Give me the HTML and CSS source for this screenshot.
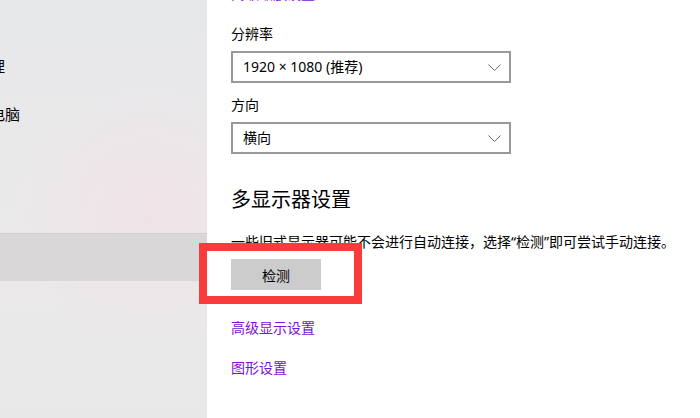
FILE: index.html
```html
<!DOCTYPE html>
<html lang="zh-CN">
<head>
<meta charset="utf-8">
<title>显示设置</title>
<link rel="stylesheet" href="styles.css">
</head>
<body>
<div class="app">
  <nav class="sidebar">
    <ul class="nav">
      <li class="nav-item"><span class="nav-text">平板电脑</span></li>
      <li class="nav-item"><span class="nav-text">多任务处理</span></li>
      <li class="nav-item"><span class="nav-text">投影到此电脑</span></li>
      <li class="nav-item"><span class="nav-text">体验共享</span></li>
      <li class="nav-item"><span class="nav-text">剪贴板</span></li>
      <li class="nav-item active"><span class="nav-text">远程桌面</span></li>
      <li class="nav-item"><span class="nav-text">关于</span></li>
    </ul>
  </nav>
  <main class="content">
    <a class="link top-link">高级缩放设置</a>
    <div class="label first-label">分辨率</div>
    <div class="select">
      <span class="select-text">1920 × 1080 (推荐)</span>
      <svg class="chevron" width="13" height="7" viewBox="0 0 13 7"><path d="M0.5 0.5 L6.5 6.5 L12.5 0.5" fill="none" stroke="#6b6b6b" stroke-width="1"/></svg>
    </div>
    <div class="label">方向</div>
    <div class="select">
      <span class="select-text">横向</span>
      <svg class="chevron" width="13" height="7" viewBox="0 0 13 7"><path d="M0.5 0.5 L6.5 6.5 L12.5 0.5" fill="none" stroke="#6b6b6b" stroke-width="1"/></svg>
    </div>
    <h2 class="heading">多显示器设置</h2>
    <p class="desc">一些旧式显示器可能不会进行自动连接，选择“检测”即可尝试手动连接。</p>
    <button class="btn">检测</button>
    <a class="link link-adv">高级显示设置</a>
    <a class="link link-gfx">图形设置</a>
  </main>
</div>
<div class="highlight"></div>
</body>
</html>
```

FILE: styles.css
```css
* { box-sizing: border-box; }

html, body {
  margin: 0;
  padding: 0;
  width: 700px;
  height: 418px;
  overflow: hidden;
  background: #ffffff;
  font-family: "Noto Sans", "Noto Sans CJK SC", sans-serif;
  color: #000;
}

.app {
  display: flex;
  width: 700px;
  height: 418px;
}

.sidebar {
  width: 207px;
  flex: 0 0 207px;
  height: 418px;
  overflow: hidden;
  background:
    radial-gradient(ellipse 140px 130px at 150px 215px, rgba(240, 226, 230, 0.9), rgba(240, 226, 230, 0) 100%),
    linear-gradient(180deg, #e6e7e9 0%, #eae9ea 45%, #ebe9ea 65%, #e8e8e8 100%);
}

.nav {
  list-style: none;
  margin: -7px 0 0 0;
  padding: 0;
}

.nav-item {
  height: 48px;
  display: flex;
  align-items: center;
  font-size: 15px;
  line-height: 20px;
  white-space: nowrap;
}

.nav-item.active {
  background: #d9d7d8;
  border-top: 1px solid #d2d0d1;
}

.nav-text {
  margin-left: -70px;
  padding-top: 2px;
}

.content {
  flex: 1;
  display: flex;
  flex-direction: column;
  align-items: flex-start;
  padding-left: 24px;
  background: #fff;
}

.link {
  color: #7a10d6;
  font-size: 14px;
  line-height: 20px;
  cursor: pointer;
}

.top-link { margin-top: -16px; }

.label {
  font-size: 14px;
  line-height: 20px;
  margin-top: 12px;
}

.first-label { margin-top: 20px; }

.select {
  margin-top: 7px;
  width: 280px;
  height: 32px;
  border: 2px solid #999999;
  display: flex;
  align-items: center;
  justify-content: space-between;
  padding: 0 8px 0 10px;
  font-size: 14px;
}

.select-text { line-height: 20px; }

.chevron { display: block; margin-top: 1px; }

.heading {
  margin: 32px 0 0 0;
  font-size: 20px;
  line-height: 28px;
  font-weight: 400;
}

.desc {
  margin: 18px 0 0 0;
  font-size: 14px;
  line-height: 20px;
  white-space: nowrap;
}

.btn {
  margin-top: 7px;
  width: 90px;
  height: 31px;
  border: none;
  background: #cccccc;
  font-family: inherit;
  font-size: 14px;
  color: #000;
  padding: 0;
}

.link-adv { margin-top: 28px; }
.link-gfx { margin-top: 20px; }

.highlight {
  position: absolute;
  left: 199px;
  top: 243px;
  width: 163px;
  height: 61px;
  border: 8px solid #fa3b3b;
}
```
